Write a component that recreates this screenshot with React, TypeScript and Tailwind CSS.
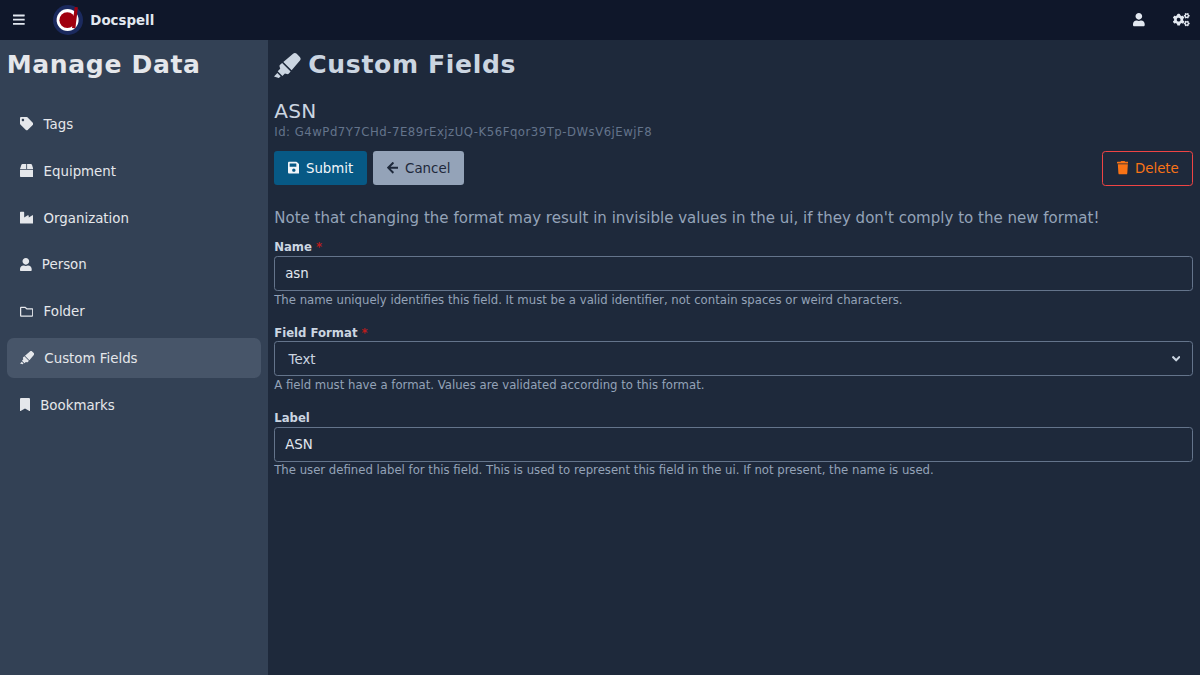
import type { ReactNode } from "react";
import type { IconType } from "react-icons";
import {
  FaAngleDown,
  FaArrowLeft,
  FaBars,
  FaBookmark,
  FaBox,
  FaCogs,
  FaHighlighter,
  FaIndustry,
  FaRegFolder,
  FaSave,
  FaTag,
  FaTrash,
  FaUser,
} from "react-icons/fa";

type NavEntry = { label: string; icon: IconType; iconClass: string; active?: boolean };

const entries: NavEntry[] = [
  { label: "Tags", icon: FaTag, iconClass: "w-[13.37px]" },
  { label: "Equipment", icon: FaBox, iconClass: "w-[13.37px]" },
  { label: "Organization", icon: FaIndustry, iconClass: "w-[13.37px]" },
  { label: "Person", icon: FaUser, iconClass: "w-[11.7px]" },
  { label: "Folder", icon: FaRegFolder, iconClass: "w-[13.37px]" },
  { label: "Custom Fields", icon: FaHighlighter, iconClass: "w-[14.2px]", active: true },
  { label: "Bookmarks", icon: FaBookmark, iconClass: "w-[10px]" },
];

function Logo() {
  return (
    <svg viewBox="0 0 30 30" className="h-[30px] w-[30px]" aria-hidden="true">
      <circle cx="15" cy="15" r="15" fill="#1b2a5e" />
      <circle cx="14.6" cy="15" r="11" fill="#ffffff" />
      <circle cx="14.3" cy="15.2" r="7.9" fill="#a0000f" />
      <path d="M21.7 1.9l3.2.4-2.5 20.9-3.4-.3z" fill="#a0000f" />
    </svg>
  );
}

function TopBar() {
  return (
    <header className="flex h-10 shrink-0 items-center bg-[#0f172a] text-[#e2e8f0]">
      <button className="ml-[13.37px] flex" aria-label="Menu">
        <FaBars className="h-[13.37px] w-[11.7px]" />
      </button>
      <a className="ml-[28.3px] flex items-center">
        <Logo />
        <span className="ml-[7px] pt-[1.4px] text-[13.37px] font-bold">Docspell</span>
      </a>
      <div className="ml-auto flex items-center">
        <FaUser className="h-[13.37px] w-[11.7px]" />
        <FaCogs className="mr-[10px] ml-[28.2px] h-[13.37px] w-[16.7px]" />
      </div>
    </header>
  );
}

function Sidebar() {
  return (
    <aside className="flex w-[267.5px] shrink-0 flex-col bg-[#334155] px-[6.67px] pt-[10px] text-[#e5e7eb]">
      <h1 className="text-[25.07px] leading-[30px] font-bold tracking-[0.65px]">Manage Data</h1>
      <nav className="mt-[24px] flex flex-col gap-[6.8px]">
        {entries.map(({ label, icon: Icon, iconClass, active }) => (
          <a
            key={label}
            className={`flex h-10 items-center rounded-[6.67px] px-[13.33px] ${active ? "bg-[#475569]" : ""}`}
          >
            <Icon className={`h-[13.37px] shrink-0 ${iconClass}`} />
            <span className="ml-[10.2px] pt-[2.2px] text-[13.37px] leading-[20px]">{label}</span>
          </a>
        ))}
      </nav>
    </aside>
  );
}

function Field({ label, required, help, children }: { label: string; required?: boolean; help: string; children: ReactNode }) {
  return (
    <div className="mb-[16.9px] flex flex-col">
      <label className="text-[11.7px] leading-[16.2px] font-bold">
        {label}
        {required && <span className="ml-[4px] text-[#b91c1c]">*</span>}
      </label>
      <div className="mt-[0.5px] flex h-[35px] items-center rounded-[3.33px] border border-[#64748b] px-[10px] text-[13.37px]">
        {children}
      </div>
      <p className="pt-[0.5px] text-[11.7px] leading-[16.2px] text-[#94a3b8]">{help}</p>
    </div>
  );
}

export default function App() {
  return (
    <div className="flex h-screen flex-col overflow-hidden bg-[#1e293b] font-['DejaVu_Sans',sans-serif] text-[#cbd5e1]">
      <TopBar />
      <div className="flex min-h-0 flex-1">
        <Sidebar />
        <main className="flex min-w-0 flex-1 flex-col pt-[10px] pr-[6.67px] pl-[6.7px]">
          <h2 className="flex items-center text-[25.07px] leading-[30px] font-bold tracking-[0.65px]">
            <FaHighlighter className="mt-px h-[25.07px] w-[26.64px]" />
            <span className="ml-[7.5px]">Custom Fields</span>
          </h2>
          <div className="mt-[17.5px] text-[20.06px] leading-[26.67px] tracking-[0.3px]">ASN</div>
          <div className="text-[11.7px] leading-[16.67px] tracking-[0.51px] text-[#64748b]">
            Id: G4wPd7Y7CHd-7E89rExjzUQ-K56Fqor39Tp-DWsV6jEwjF8
          </div>
          <div className="mt-[9.7px] flex h-[35px] items-center text-[13.37px]">
            <button className="flex h-[33.4px] items-center rounded-[3.33px] bg-[#075985] px-[13.37px] text-[#f1f5f9]">
              <FaSave className="h-[13.37px] w-[11.7px]" />
              <span className="ml-[6.7px] pt-[1.4px]">Submit</span>
            </button>
            <button className="ml-[6.7px] flex h-[33.4px] items-center rounded-[3.33px] bg-[#94a3b8] px-[13.37px] text-[#1e293b]">
              <FaArrowLeft className="h-[13.37px] w-[11.7px]" />
              <span className="ml-[6.7px] pt-[1.4px]">Cancel</span>
            </button>
            <button className="ml-auto flex h-[35px] items-center rounded-[3.33px] border border-[#ef4444] px-[13.5px] text-[#f97316]">
              <FaTrash className="h-[13.37px] w-[11.7px]" />
              <span className="ml-[6.7px] pt-[1.4px]">Delete</span>
            </button>
          </div>
          <p className="mt-[21.4px] mb-[9.2px] text-[15.04px] leading-[23.33px] text-[#94a3b8]">
            Note that changing the format may result in invisible values in the ui, if they don't comply to the new
            format!
          </p>
          <Field
            label="Name"
            required
            help="The name uniquely identifies this field. It must be a valid identifier, not contain spaces or weird characters."
          >
            <span className="pt-[1.4px] text-[#e2e8f0]">asn</span>
          </Field>
          <Field
            label="Field Format"
            required
            help="A field must have a format. Values are validated according to this format."
          >
            <span className="ml-[3.33px] pt-[1.4px]">Text</span>
            <FaAngleDown className="mr-[2px] mb-px ml-auto h-[13.37px] w-[8.36px]" />
          </Field>
          <Field
            label="Label"
            help="The user defined label for this field. This is used to represent this field in the ui. If not present, the name is used."
          >
            <span className="pt-[1.4px] text-[#e2e8f0]">ASN</span>
          </Field>
        </main>
      </div>
    </div>
  );
}
